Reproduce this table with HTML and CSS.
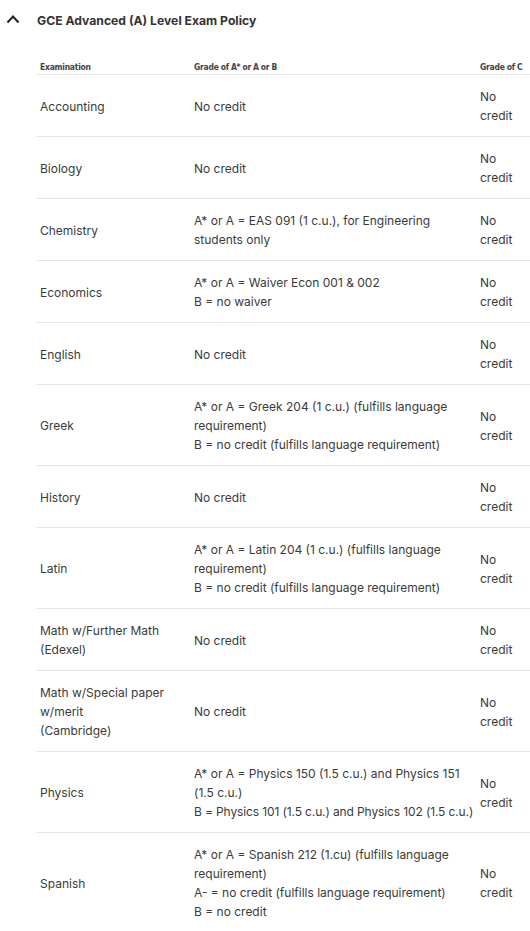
FILE: index.html
```html
<!DOCTYPE html>
<html>
<head>
<meta charset="utf-8">
<link rel="stylesheet" href="styles.css">
</head>
<body>
<div class="panel">
  <div class="heading">
    <svg class="chev" width="14" height="10" viewBox="0 0 14 10"><path d="M1.5 8.5 L7 2.5 L12.5 8.5" fill="none" stroke="#222" stroke-width="2"/></svg>
    <span class="title">GCE Advanced (A) Level Exam Policy</span>
  </div>
  <table class="policy">
    <colgroup><col class="c1"><col class="c2"><col class="c3"></colgroup>
    <thead>
      <tr><th>Examination</th><th>Grade of A* or A or B</th><th>Grade of C</th></tr>
    </thead>
    <tbody>
      <tr><td>Accounting</td><td>No credit</td><td>No credit</td></tr>
      <tr><td>Biology</td><td>No credit</td><td>No credit</td></tr>
      <tr><td>Chemistry</td><td>A* or A = EAS 091 (1 c.u.), for Engineering students only</td><td>No credit</td></tr>
      <tr><td>Economics</td><td>A* or A = Waiver Econ 001 &amp; 002<br>B = no waiver</td><td>No credit</td></tr>
      <tr><td>English</td><td>No credit</td><td>No credit</td></tr>
      <tr><td>Greek</td><td>A* or A = Greek 204 (1 c.u.) (fulfills language requirement)<br>B = no credit (fulfills language requirement)</td><td>No credit</td></tr>
      <tr><td>History</td><td>No credit</td><td>No credit</td></tr>
      <tr><td>Latin</td><td>A* or A = Latin 204 (1 c.u.) (fulfills language requirement)<br>B = no credit (fulfills language requirement)</td><td>No credit</td></tr>
      <tr><td>Math w/Further Math (Edexel)</td><td>No credit</td><td>No credit</td></tr>
      <tr><td>Math w/Special paper w/merit<br>(Cambridge)</td><td>No credit</td><td>No credit</td></tr>
      <tr><td>Physics</td><td>A* or A = Physics 150 (1.5 c.u.) and Physics 151 (1.5 c.u.)<br><span class="nowrap">B = Physics 101 (1.5 c.u.) and Physics 102 (1.5 c.u.)</span></td><td>No credit</td></tr>
      <tr><td>Spanish</td><td>A* or A = Spanish 212 (1.cu) (fulfills language requirement)<br>A- = no credit (fulfills language requirement)<br>B = no credit</td><td>No credit</td></tr>
    </tbody>
  </table>
</div>
</body>
</html>
```
FILE: styles.css
```css
html, body {
  margin: 0;
  padding: 0;
  background: #ffffff;
}
body {
  font-family: Inter, "Noto Sans", sans-serif;
  color: #3a3a3a;
  overflow: hidden;
}
.panel {
  padding: 11px 0 0 0;
}
.heading {
  display: flex;
  align-items: center;
  height: 18px;
  padding-left: 6px;
}
.chev {
  display: block;
  margin-right: 17px;
  margin-top: -2px;
}
.title {
  font-size: 12.2px;
  font-weight: 700;
  color: #333;
}
.policy {
  margin: 33px 0 0 36px;
  border-collapse: collapse;
  table-layout: fixed;
  width: 500px;
}
.c1 { width: 154px; }
.c2 { width: 286px; }
.c3 { width: 60px; }
.policy th {
  font-family: "DejaVu Sans Condensed", "Liberation Sans Narrow", sans-serif;
  font-stretch: condensed;
  font-size: 8.5px;
  line-height: 10px;
  letter-spacing: -0.25px;
  word-spacing: -0.3px;
  font-weight: 700;
  color: #444;
  text-align: left;
  padding: 0 0 2px 4px;
  border-bottom: 1px solid #e6e6e6;
  white-space: nowrap;
}
.policy td {
  font-size: 12px;
  line-height: 19px;
  padding: 12px 0 11px 4px;
  vertical-align: middle;
  border-bottom: 1px solid #e6e6e6;
}
.policy td:nth-child(3) {
  padding-right: 22px;
}
.nowrap {
  white-space: nowrap;
  letter-spacing: -0.12px;
}
```
